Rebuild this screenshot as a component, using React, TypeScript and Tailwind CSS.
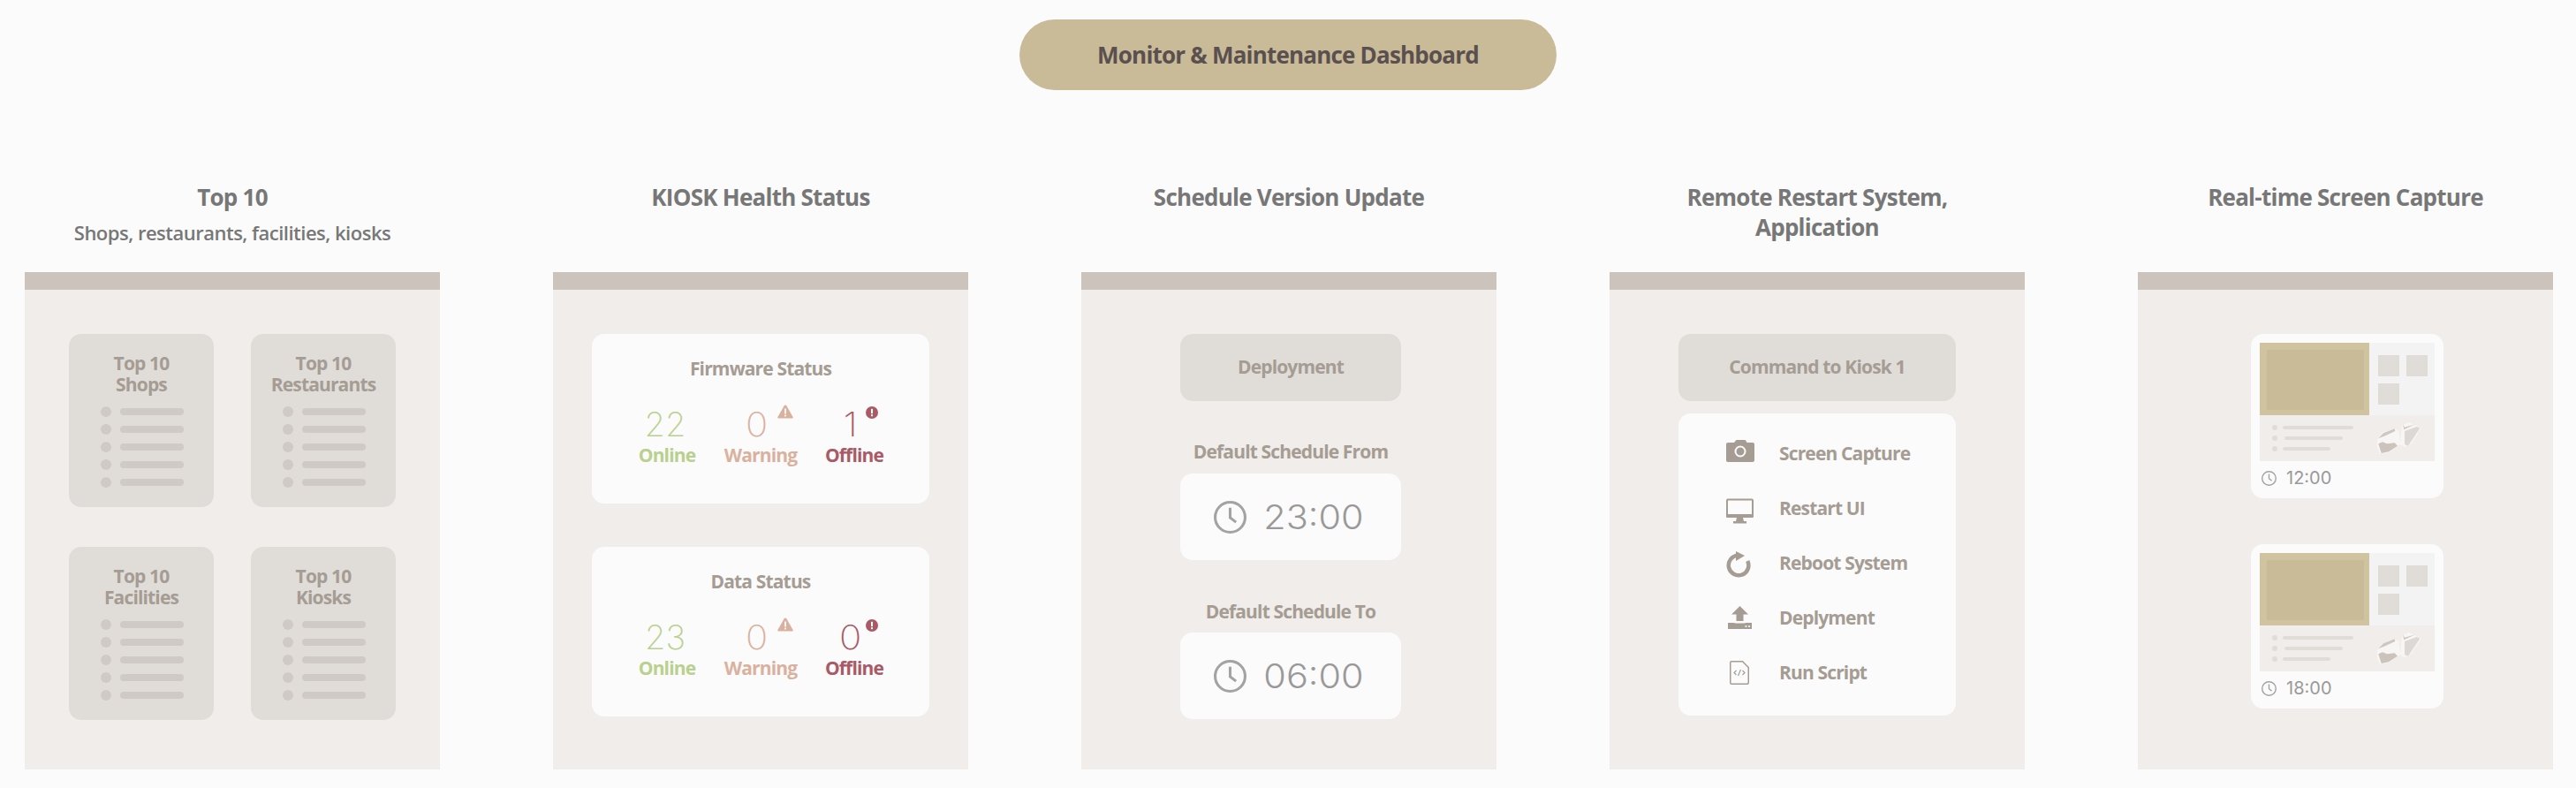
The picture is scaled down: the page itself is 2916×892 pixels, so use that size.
import React from 'react';

const sans = 'font-["Open_Sans",sans-serif]';
const digits = 'font-["Inter",sans-serif]';

function ClockIcon({ size }: { size: number }) {
  return (
    <svg width={size} height={size} viewBox="0 0 36 36" className="shrink-0">
      <circle cx="18" cy="18" r="16.5" fill="none" stroke="#a3a3a3" strokeWidth="3" />
      <path d="M18 7.5V18.5L24.5 23.5" fill="none" stroke="#a3a3a3" strokeWidth="3" />
    </svg>
  );
}

function ColumnTitle({ children, sub }: { children: React.ReactNode; sub?: string }) {
  return (
    <div className={`h-[103px] pt-[1px] text-center text-[#777777] ${sans}`}>
      <div className="text-[26px] leading-[34px] font-bold tracking-[-0.75px]">{children}</div>
      {sub && <div className="mt-[8px] text-[22px] leading-[30px] font-semibold tracking-[-0.5px]">{sub}</div>}
    </div>
  );
}

function Panel({ title, sub, children }: { title: React.ReactNode; sub?: string; children: React.ReactNode }) {
  return (
    <div className="w-[470px] shrink-0">
      <ColumnTitle sub={sub}>{title}</ColumnTitle>
      <div className="h-[563px] bg-[#f0edea]">
        <div className="h-[20px] bg-[#ccc3bc]" />
        <div className="flex flex-col items-center pt-[50px]">{children}</div>
      </div>
    </div>
  );
}

function TopCard({ name }: { name: string }) {
  return (
    <div className={`h-[196px] w-[164px] rounded-[14px] bg-[#e0ddd9] pt-[21px] ${sans}`}>
      <div className="text-center text-[21px] leading-[24px] font-bold tracking-[-0.85px] text-[#a59c93]">
        Top 10
        <br />
        {name}
      </div>
      <div className="mt-[13px] flex flex-col gap-[8px] pl-[36px]">
        {[0, 1, 2, 3, 4].map((i) => (
          <div key={i} className="flex h-[12px] items-center gap-[10px]">
            <div className="h-[12px] w-[12px] rounded-full bg-[#cfcac5]" />
            <div className="h-[8px] w-[72px] rounded-full bg-[#cfcac5]" />
          </div>
        ))}
      </div>
    </div>
  );
}

function WarnBadge() {
  return (
    <svg width="18" height="16" viewBox="0 0 18 16" className="absolute top-[-2px] left-[72px]">
      <path d="M9 0.5C9.6 0.5 10 0.8 10.3 1.3L17.6 14C18 14.8 17.6 15.5 16.7 15.5H1.3C0.4 15.5 0 14.8 0.4 14L7.7 1.3C8 0.8 8.4 0.5 9 0.5Z" fill="#d9b29f" />
      <rect x="8.1" y="4.5" width="1.8" height="6" fill="#fbfbfb" />
      <rect x="8.1" y="11.6" width="1.8" height="1.9" fill="#fbfbfb" />
    </svg>
  );
}

function ErrorBadge() {
  return (
    <svg width="14" height="14" viewBox="0 0 14 14" className="absolute top-[0px] left-[66px]">
      <circle cx="7" cy="7" r="7" fill="#a95a66" />
      <rect x="6" y="2.8" width="2" height="5.4" fill="#fbfbfb" />
      <rect x="6" y="9.2" width="2" height="2" fill="#fbfbfb" />
    </svg>
  );
}

function HealthCard({ title, online, warning, offline }: { title: string; online: number; warning: number; offline: number }) {
  return (
    <div className="h-[192px] w-[382px] rounded-[14px] bg-[#fbfbfb] pt-[26px]">
      <div className={`h-[26px] text-center text-[21px] leading-[26px] font-bold tracking-[-0.85px] text-[#a59c93] ${sans}`}>{title}</div>
      <div className="mt-[30px] grid grid-cols-[106px_106px_106px] justify-center">
        <div className="relative text-center text-[#b9d08e]">
          <div className={`h-[40px] pr-[4px] text-[38px] leading-[40px] font-extralight ${digits}`}>{online}</div>
          <div className={`mt-[2px] text-[21px] leading-[26px] font-bold tracking-[-0.85px] ${sans}`}>Online</div>
        </div>
        <div className="relative text-center text-[#d9b29f]">
          <div className={`h-[40px] scale-x-[1.1] pr-[8px] text-[38px] leading-[40px] font-extralight ${digits}`}>{warning}</div>
          <WarnBadge />
          <div className={`mt-[2px] text-[21px] leading-[26px] font-bold tracking-[-0.85px] ${sans}`}>Warning</div>
        </div>
        <div className="relative text-center text-[#a95a66]">
          <div className={`h-[40px] scale-x-[1.1] pr-[8px] text-[38px] leading-[40px] font-extralight ${digits}`}>{offline}</div>
          <ErrorBadge />
          <div className={`mt-[2px] text-[21px] leading-[26px] font-bold tracking-[-0.85px] ${sans}`}>Offline</div>
        </div>
      </div>
    </div>
  );
}

function TimeBox({ time }: { time: string }) {
  return (
    <div className="flex h-[98px] w-[250px] items-center gap-[16px] rounded-[14px] bg-[#fbfbfb] pl-[38px]">
      <ClockIcon size={37} />
      <span className={`w-[120px] scale-x-[1.09] text-center text-[38px] leading-none font-light text-[#999999] ${digits}`}>{time}</span>
    </div>
  );
}

function CommandIcon({ kind }: { kind: string }) {
  return (
    <svg width="32" height="40" viewBox="0 0 32 40" fill="#a59c93">
      {kind === 'camera' && (
        <>
          <path d="M2 8H9L11 5.6C11.3 5.2 11.6 5 12 5H21C21.5 5 22 5.3 22.3 5.7L23.5 8H30C31.2 8 32 8.8 32 10V28C32 29.2 31.2 30 30 30H2C0.8 30 0 29.2 0 28V10C0 8.8 0.8 8 2 8Z" />
          <circle cx="16" cy="18" r="5.5" fill="none" stroke="#fbfbfb" strokeWidth="2" />
        </>
      )}
      {kind === 'monitor' && (
        <>
          <rect x="1" y="10.5" width="29" height="19" rx="1" fill="none" stroke="#a59c93" strokeWidth="2" />
          <rect x="0" y="27" width="31" height="4" rx="1" />
          <path d="M12 31H19L20 35H23V37.5H8V35H11Z" />
        </>
      )}
      {kind === 'reboot' && (
        <>
          <path d="M13 11.7A11.3 11.3 0 1 0 24.2 18" fill="none" stroke="#a59c93" strokeWidth="4.5" />
          <path d="M11 7L21 12L11 18Z" />
        </>
      )}
      {kind === 'upload' && (
        <>
          <path d="M15.5 7L25 16.5H19.5V24H11.5V16.5H6Z" />
          <path d="M2 26H9.5V26.5H21.5V26H29V33H2Z" />
          <circle cx="22.5" cy="30" r="1.1" fill="#fbfbfb" />
          <circle cx="26" cy="30" r="1.1" fill="#fbfbfb" />
        </>
      )}
      {kind === 'file' && (
        <>
          <path d="M6 7.75H18.5L25.25 14.5V31.5C25.25 32.5 24.5 33.25 23.5 33.25H6C5 33.25 4.75 32.5 4.75 31.5V9C4.75 8.2 5.2 7.75 6 7.75Z" fill="none" stroke="#a59c93" strokeWidth="1.5" />
          <path d="M11.5 18L9 20.5L11.5 23M18.5 18L21 20.5L18.5 23M16.5 17L13.5 24" fill="none" stroke="#a59c93" strokeWidth="1.2" />
        </>
      )}
    </svg>
  );
}

function CommandRow({ kind, label }: { kind: string; label: string }) {
  return (
    <div className="flex h-[62px] items-center pl-[54px]">
      <div className="w-[60px]">
        <CommandIcon kind={kind} />
      </div>
      <span className={`pt-[2px] text-[21px] font-bold tracking-[-0.85px] text-[#a59c93] ${sans}`}>{label}</span>
    </div>
  );
}

function MapDrawing() {
  return (
    <svg width="52" height="37" viewBox="0 0 52 37" className="shrink-0">
      <path d="M1 20L7 12L21 7L25.7 10L27 25L14 34L4 36L1 28Z" fill="#f7f6f4" />
      <path d="M29 3.3L37 0L50.7 6.7L39 25L32 28.3L27 25Z" fill="#f7f6f4" />
      <path d="M2.3 24.3L7 22.3L12 24.3L20.7 23.3L24 26.7L14 33.3L5.7 35Z" fill="#ccc3bc" />
      <path d="M2.3 18.3L8 12.3L20.7 7.3L21.3 10L9 15.7Z" fill="#cfc8c1" />
      <path d="M32 10L45.7 5L49.3 6.7L36 26.7L32 25Z" fill="#dcd9d4" />
      <path d="M30 2.3L31.3 8.3L44 2.3L32 5.7Z" fill="#cfc8c1" />
    </svg>
  );
}

function ScreenCard({ time }: { time: string }) {
  return (
    <div className="h-[186px] w-[218px] rounded-[14px] bg-[#fbfbfb] px-[10px] pt-[10px]">
      <div className="flex h-[82px]">
        <div className="w-[124px] bg-[#d0c3a0] px-[8px] py-[8px]">
          <div className="h-[68px] w-[110px] bg-[#c9bb97]" />
        </div>
        <div className="grid flex-1 grid-cols-[24px_24px] content-start gap-[8px] bg-[#f3f3f3] pt-[14px] pl-[10px]">
          <div className="h-[24px] bg-[#e0ddd9]" />
          <div className="h-[24px] bg-[#e0ddd9]" />
          <div className="h-[24px] bg-[#e0ddd9]" />
        </div>
      </div>
      <div className="flex h-[52px] items-center justify-between bg-[#f0edea] pr-[14px] pl-[14px]">
        <div className="flex flex-col gap-[8px]">
          <div className="flex h-[4px] items-center gap-[6px]">
            <div className="h-[6px] w-[6px] rounded-full bg-[#e0ddd9]" />
            <div className="h-[4px] w-[80px] rounded-full bg-[#e0ddd9]" />
          </div>
          <div className="flex h-[4px] items-center gap-[8px]">
            <div className="h-[6px] w-[6px] rounded-full bg-[#e0ddd9]" />
            <div className="h-[4px] w-[66px] rounded-full bg-[#e0ddd9]" />
          </div>
          <div className="flex h-[4px] items-center gap-[6px]">
            <div className="h-[6px] w-[6px] rounded-full bg-[#e0ddd9]" />
            <div className="h-[4px] w-[54px] rounded-full bg-[#e0ddd9]" />
          </div>
        </div>
        <MapDrawing />
      </div>
      <div className="flex h-[38px] items-center gap-[11px] pl-[2px]">
        <ClockIcon size={17} />
        <span className={`text-[20px] leading-none font-normal text-[#999999] ${digits}`}>{time}</span>
      </div>
    </div>
  );
}

export default function App() {
  return (
    <div className="h-[892px] w-[2916px] overflow-hidden bg-[#fbfbfb] pt-[22px]">
      <div className="flex justify-center">
        <div className={`flex h-[80px] w-[608px] items-center justify-center rounded-full bg-[#c9bb97] text-[26px] font-bold tracking-[-0.8px] text-[#5a5050] ${sans}`}>
          Monitor &amp; Maintenance Dashboard
        </div>
      </div>
      <div className="mt-[103px] flex gap-[128px] pl-[28px]">
        <Panel title="Top 10" sub="Shops, restaurants, facilities, kiosks">
          <div className="grid grid-cols-[164px_164px] gap-x-[42px] gap-y-[45px]">
            <TopCard name="Shops" />
            <TopCard name="Restaurants" />
            <TopCard name="Facilities" />
            <TopCard name="Kiosks" />
          </div>
        </Panel>
        <Panel title="KIOSK Health Status">
          <div className="flex flex-col gap-[49px]">
            <HealthCard title="Firmware Status" online={22} warning={0} offline={1} />
            <HealthCard title="Data Status" online={23} warning={0} offline={0} />
          </div>
        </Panel>
        <Panel title="Schedule Version Update">
          <div className="ml-[4px] flex flex-col items-center">
            <div className={`flex h-[76px] w-[250px] items-center justify-center rounded-[14px] bg-[#e0ddd9] text-[21px] font-bold tracking-[-0.85px] text-[#a59c93] ${sans}`}>
              Deployment
            </div>
            <div className={`mt-[44px] mb-[12px] text-[21px] leading-[26px] font-bold tracking-[-0.85px] text-[#a59c93] ${sans}`}>Default Schedule From</div>
            <TimeBox time="23:00" />
            <div className={`mt-[45px] mb-[11px] text-[21px] leading-[26px] font-bold tracking-[-0.85px] text-[#a59c93] ${sans}`}>Default Schedule To</div>
            <TimeBox time="06:00" />
          </div>
        </Panel>
        <Panel
          title={
            <>
              Remote Restart System,
              <br />
              Application
            </>
          }
        >
          <div className={`flex h-[76px] w-[314px] items-center justify-center rounded-[14px] bg-[#e0ddd9] text-[21px] font-bold tracking-[-0.85px] text-[#a59c93] ${sans}`}>
            Command to Kiosk 1
          </div>
          <div className="mt-[14px] h-[342px] w-[314px] rounded-[14px] bg-[#fbfbfb] pt-[14px]">
            <CommandRow kind="camera" label="Screen Capture" />
            <CommandRow kind="monitor" label="Restart UI" />
            <CommandRow kind="reboot" label="Reboot System" />
            <CommandRow kind="upload" label="Deplyment" />
            <CommandRow kind="file" label="Run Script" />
          </div>
        </Panel>
        <Panel title="Real-time Screen Capture">
          <div className="ml-[4px] flex flex-col gap-[52px]">
            <ScreenCard time="12:00" />
            <ScreenCard time="18:00" />
          </div>
        </Panel>
      </div>
    </div>
  );
}
